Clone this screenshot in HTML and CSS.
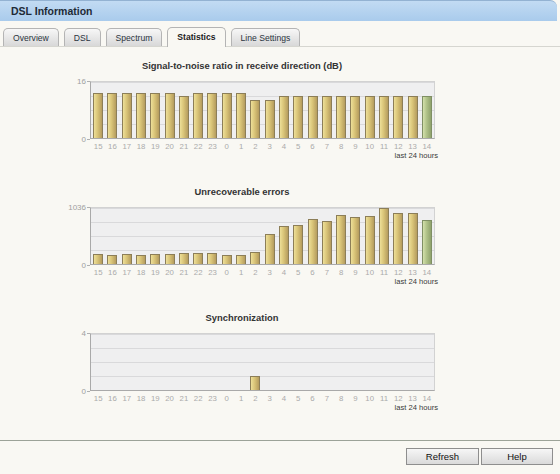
FILE: index.html
```html
<!DOCTYPE html>
<html>
<head>
<meta charset="utf-8">
<link rel="stylesheet" href="styles.css">
</head>
<body>
<div class="header">DSL Information</div>
<div class="tabs">
  <div class="tab">Overview</div>
  <div class="tab">DSL</div>
  <div class="tab">Spectrum</div>
  <div class="tab active">Statistics</div>
  <div class="tab">Line Settings</div>
</div>
<div class="content">
  <div class="chart">
    <div class="title">Signal-to-noise ratio in receive direction (dB)</div>
    <div class="plotrow">
      <div class="yaxis"><div class="ylab">16<span class="tick"></span></div><div class="ylab">0<span class="tick"></span></div></div>
      <div class="plot">
        <div class="bar" style="height:81.25%"></div><div class="bar" style="height:81.25%"></div><div class="bar" style="height:81.25%"></div><div class="bar" style="height:81.25%"></div><div class="bar" style="height:81.25%"></div><div class="bar" style="height:81.25%"></div><div class="bar" style="height:75%"></div><div class="bar" style="height:81.25%"></div><div class="bar" style="height:81.25%"></div><div class="bar" style="height:81.25%"></div><div class="bar" style="height:81.25%"></div><div class="bar" style="height:68.75%"></div><div class="bar" style="height:68.75%"></div><div class="bar" style="height:75%"></div><div class="bar" style="height:75%"></div><div class="bar" style="height:75%"></div><div class="bar" style="height:75%"></div><div class="bar" style="height:75%"></div><div class="bar" style="height:75%"></div><div class="bar" style="height:75%"></div><div class="bar" style="height:75%"></div><div class="bar" style="height:75%"></div><div class="bar" style="height:75%"></div><div class="bar now" style="height:75%"></div>
      </div>
    </div>
    <div class="xlabels"><span>15</span><span>16</span><span>17</span><span>18</span><span>19</span><span>20</span><span>21</span><span>22</span><span>23</span><span>0</span><span>1</span><span>2</span><span>3</span><span>4</span><span>5</span><span>6</span><span>7</span><span>8</span><span>9</span><span>10</span><span>11</span><span>12</span><span>13</span><span>14</span></div>
    <div class="last">last 24 hours</div>
  </div>

  <div class="chart">
    <div class="title">Unrecoverable errors</div>
    <div class="plotrow">
      <div class="yaxis"><div class="ylab">1036<span class="tick"></span></div><div class="ylab">0<span class="tick"></span></div></div>
      <div class="plot">
        <div class="bar" style="height:17.86%"></div><div class="bar" style="height:16.7%"></div><div class="bar" style="height:17.86%"></div><div class="bar" style="height:15.64%"></div><div class="bar" style="height:17.86%"></div><div class="bar" style="height:17.86%"></div><div class="bar" style="height:19.59%"></div><div class="bar" style="height:19.59%"></div><div class="bar" style="height:19.59%"></div><div class="bar" style="height:16.7%"></div><div class="bar" style="height:16.7%"></div><div class="bar" style="height:21.33%"></div><div class="bar" style="height:54.34%"></div><div class="bar" style="height:68.24%"></div><div class="bar" style="height:70.56%"></div><div class="bar" style="height:80.41%"></div><div class="bar" style="height:77.51%"></div><div class="bar" style="height:87.26%"></div><div class="bar" style="height:84.46%"></div><div class="bar" style="height:86.2%"></div><div class="bar" style="height:100%"></div><div class="bar" style="height:91.99%"></div><div class="bar" style="height:91.99%"></div><div class="bar now" style="height:78.67%"></div>
      </div>
    </div>
    <div class="xlabels"><span>15</span><span>16</span><span>17</span><span>18</span><span>19</span><span>20</span><span>21</span><span>22</span><span>23</span><span>0</span><span>1</span><span>2</span><span>3</span><span>4</span><span>5</span><span>6</span><span>7</span><span>8</span><span>9</span><span>10</span><span>11</span><span>12</span><span>13</span><span>14</span></div>
    <div class="last">last 24 hours</div>
  </div>

  <div class="chart">
    <div class="title">Synchronization</div>
    <div class="plotrow">
      <div class="yaxis"><div class="ylab">4<span class="tick"></span></div><div class="ylab">0<span class="tick"></span></div></div>
      <div class="plot">
        <div></div><div></div><div></div><div></div><div></div><div></div><div></div><div></div><div></div><div></div><div></div><div class="bar" style="height:25%"></div><div></div><div></div><div></div><div></div><div></div><div></div><div></div><div></div><div></div><div></div><div></div><div></div>
      </div>
    </div>
    <div class="xlabels"><span>15</span><span>16</span><span>17</span><span>18</span><span>19</span><span>20</span><span>21</span><span>22</span><span>23</span><span>0</span><span>1</span><span>2</span><span>3</span><span>4</span><span>5</span><span>6</span><span>7</span><span>8</span><span>9</span><span>10</span><span>11</span><span>12</span><span>13</span><span>14</span></div>
    <div class="last">last 24 hours</div>
  </div>
</div>
<div class="footer">
  <button class="btn refresh">Refresh</button>
  <button class="btn help">Help</button>
</div>
</body>
</html>
```
FILE: styles.css
```css
html, body {
  margin: 0;
  padding: 0;
  background: #f9f8f3;
  font-family: "Liberation Sans", Arial, sans-serif;
  color: #222;
}
body {
  width: 560px;
  height: 474px;
  overflow: hidden;
}
.header {
  height: 20px;
  margin-right: 3px;
  border-top: 1px solid #93b2d2;
  border-top-right-radius: 7px;
  background: linear-gradient(to bottom, #c2dbf3, #a9cbec);
  font-weight: bold;
  font-size: 10.5px;
  line-height: 20px;
  padding-left: 11px;
  color: #1e2a36;
}
.tabs {
  display: flex;
  align-items: flex-end;
  gap: 5px;
  padding-left: 3px;
  margin-top: 6px;
  height: 19px;
  border-bottom: 1px solid #d6d6d0;
}
.tab {
  height: 18px;
  box-sizing: border-box;
  padding: 0 9px;
  border: 1px solid #b4b4b4;
  border-bottom: none;
  border-radius: 5px 5px 0 0;
  background: linear-gradient(to bottom, #f7f7f7, #d8d8d8);
  font-size: 8.6px;
  line-height: 18px;
  color: #2a3440;
}
.tab.active {
  height: 20px;
  margin-bottom: -1px;
  line-height: 19px;
  background: #f9f8f3;
  font-weight: bold;
  color: #222;
}
.content {
  height: 393px;
  padding-top: 12px;
  box-sizing: border-box;
}
.chart {
  width: 440px;
  margin-left: 22px;
  margin-bottom: 25px;
}
.title {
  text-align: center;
  font-weight: bold;
  font-size: 9.4px;
  line-height: 14px;
  color: #333;
  margin-bottom: 8px;
}
.plotrow {
  display: flex;
}
.yaxis {
  width: 68px;
  display: flex;
  flex-direction: column;
  justify-content: space-between;
  align-items: flex-end;
}
.ylab {
  display: flex;
  align-items: center;
  height: 8px;
  margin-top: -4px;
  margin-bottom: -4px;
  font-size: 8px;
  color: #a0a0a0;
}
.tick {
  width: 3px;
  height: 1px;
  background: #b0b0b0;
  margin-left: 1px;
}
.plot {
  width: 343px;
  height: 56px;
  display: grid;
  grid-template-columns: repeat(24, 1fr);
  align-items: end;
  justify-items: center;
  border-top: 1px solid #d2d2d2;
  border-right: 1px solid #d2d2d2;
  border-left: 1px solid #a9a9a9;
  border-bottom: 1px solid #a9a9a9;
  background-color: #efeff0;
  background-image: linear-gradient(to bottom, #d9d9db 1px, transparent 1px);
  background-size: 100% 25%;
}
.bar {
  width: 10px;
  box-sizing: border-box;
  border: 1px solid #8c7e58;
  border-bottom: none;
  background: linear-gradient(to right, #eddf98, #d9c478 45%, #b59c5e);
}
.bar.now {
  border-color: #7f8f64;
  background: linear-gradient(to right, #d3e0ab, #b0c289 45%, #8fa26c);
}
.xlabels {
  margin-left: 69px;
  width: 343px;
  display: grid;
  grid-template-columns: repeat(24, 1fr);
  margin-top: 2px;
  font-size: 7.8px;
  line-height: 11px;
  color: #ababab;
  text-align: center;
}
.last {
  width: 416px;
  text-align: right;
  font-size: 7.6px;
  line-height: 8px;
  color: #3a3a3a;
}
.footer {
  border-top: 1px solid #9ca398;
  display: flex;
  justify-content: flex-end;
  gap: 2px;
  padding-top: 7px;
  padding-right: 7px;
}
.btn {
  height: 17px;
  padding: 0;
  border: 1px solid #8e8e8e;
  background: linear-gradient(to bottom, #f6f6f6, #dadada);
  font-family: "Liberation Sans", Arial, sans-serif;
  font-size: 9.5px;
  color: #111;
}
.refresh { width: 73px; }
.help { width: 72px; }
```
